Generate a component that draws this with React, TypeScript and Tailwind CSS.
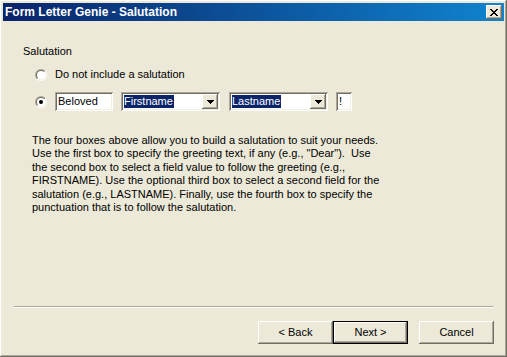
import React from "react";

const raised =
  "shadow-[inset_-1px_-1px_0_#716f64,inset_1px_1px_0_#ffffff,inset_-2px_-2px_0_#aca899,inset_2px_2px_0_#ece9d8]";
const sunken =
  "shadow-[inset_1px_1px_0_#aca899,inset_-1px_-1px_0_#ffffff,inset_2px_2px_0_#716f64,inset_-2px_-2px_0_#f1efe2]";

const Radio: React.FC<{ checked?: boolean }> = ({ checked }) => (
  <svg width="12" height="12" viewBox="0 0 12 12" className="shrink-0">
    <defs>
      <linearGradient id="ro" x1="0" y1="0" x2="1" y2="1">
        <stop offset="0.5" stopColor="#aca899" />
        <stop offset="0.5" stopColor="#ffffff" />
      </linearGradient>
      <linearGradient id="ri" x1="0" y1="0" x2="1" y2="1">
        <stop offset="0.5" stopColor="#716f64" />
        <stop offset="0.5" stopColor="#f1efe2" />
      </linearGradient>
    </defs>
    <circle cx="6" cy="6" r="6" fill="url(#ro)" />
    <circle cx="6" cy="6" r="5" fill="url(#ri)" />
    <circle cx="6" cy="6" r="4" fill="#ffffff" />
    {checked && <circle cx="6" cy="6" r="2" fill="#000000" />}
  </svg>
);

const Arrow = () => (
  <svg width="7" height="4" viewBox="0 0 7 4">
    <path d="M0 0h7v1h-1v1h-1v1h-1v1h-1v-1h-1v-1h-1v-1h-1z" fill="#000" />
  </svg>
);

const Combo: React.FC<{ value: string }> = ({ value }) => (
  <div className={`w-[99px] h-[19px] bg-white flex items-center p-[2px] ${sunken}`}>
    <div className="flex-1 flex items-center pl-[1px]">
      <span className="bg-[#0a246a] text-white leading-[13px] pr-[1px]">{value}</span>
    </div>
    <div className={`w-[16px] h-[15px] bg-[#ece9d8] flex items-center justify-center ${raised}`}>
      <Arrow />
    </div>
  </div>
);

const Button: React.FC<{ label: string; primary?: boolean }> = ({ label, primary }) => (
  <button
    className={`w-[75px] h-[23px] bg-[#ece9d8] text-[11px] text-black flex items-center justify-center ${
      primary
        ? "shadow-[inset_0_0_0_1px_#000000,inset_-2px_-2px_0_#716f64,inset_2px_2px_0_#ffffff,inset_-3px_-3px_0_#aca899]"
        : raised
    }`}
  >
    {label}
  </button>
);

export default function App() {
  return (
    <div
      className={`w-[507px] h-[357px] bg-[#ece9d8] p-[3px] flex flex-col text-[11px] text-black ${raised}`}
      style={{ fontFamily: '"Liberation Sans", Arial, sans-serif' }}
    >
      <div className="h-[18px] flex items-center justify-between bg-gradient-to-r from-[#0a246a] to-[#1084d0] pl-[2px] pr-[2px]">
        <span className="text-white font-bold text-[12px] leading-[14px]">
          Form Letter Genie - Salutation
        </span>
        <div className={`w-[16px] h-[14px] bg-[#ece9d8] flex items-center justify-center ${raised}`}>
          <svg width="8" height="7" viewBox="0 0 8 7">
            <path
              d="M0 0h2v1h1v1h2v-1h1v-1h2v1h-1v1h-1v1h-1v1h1v1h1v1h1v1h-2v-1h-1v-1h-2v1h-1v1h-2v-1h1v-1h1v-1h1v-1h-1v-1h-1v-1h-1z"
              fill="#000"
            />
          </svg>
        </div>
      </div>

      <div className="flex-1 flex flex-col pt-[24px]">
        <div className="pl-[20px] leading-[13px]">Salutation</div>

        <div className="pl-[32px] mt-[10px] flex items-center gap-[8px] leading-[13px]">
          <Radio />
          <span>Do not include a salutation</span>
        </div>

        <div className="pl-[32px] mt-[11px] flex items-center">
          <Radio checked />
          <div className={`ml-[8px] w-[58px] h-[19px] bg-white flex items-center pl-[3px] ${sunken}`}>
            Beloved
          </div>
          <div className="ml-[8px]">
            <Combo value="Firstname" />
          </div>
          <div className="ml-[9px]">
            <Combo value="Lastname" />
          </div>
          <div className={`ml-[8px] w-[16px] h-[19px] bg-white flex items-center pl-[3px] ${sunken}`}>
            !
          </div>
        </div>

        <p className="pl-[29px] mt-[23px] leading-[13.4px] whitespace-pre">
          {"The four boxes above allow you to build a salutation to suit your needs.\n"}
          {'Use the first box to specify the greeting text, if any (e.g., "Dear").  Use\n'}
          {"the second box to select a field value to follow the greeting (e.g.,\n"}
          {"FIRSTNAME). Use the optional third box to select a second field for the\n"}
          {"salutation (e.g., LASTNAME). Finally, use the fourth box to specify the\n"}
          {"punctuation that is to follow the salutation."}
        </p>

        <div className="flex-1" />

        <div className="ml-[11px] mr-[11px] h-[2px] border-t border-[#aca899] border-b border-b-white" />

        <div className="mt-[13px] mb-[10px] pr-[10px] flex justify-end">
          <Button label="< Back" />
          <Button label="Next >" primary />
          <div className="w-[11px]" />
          <Button label="Cancel" />
        </div>
      </div>
    </div>
  );
}
